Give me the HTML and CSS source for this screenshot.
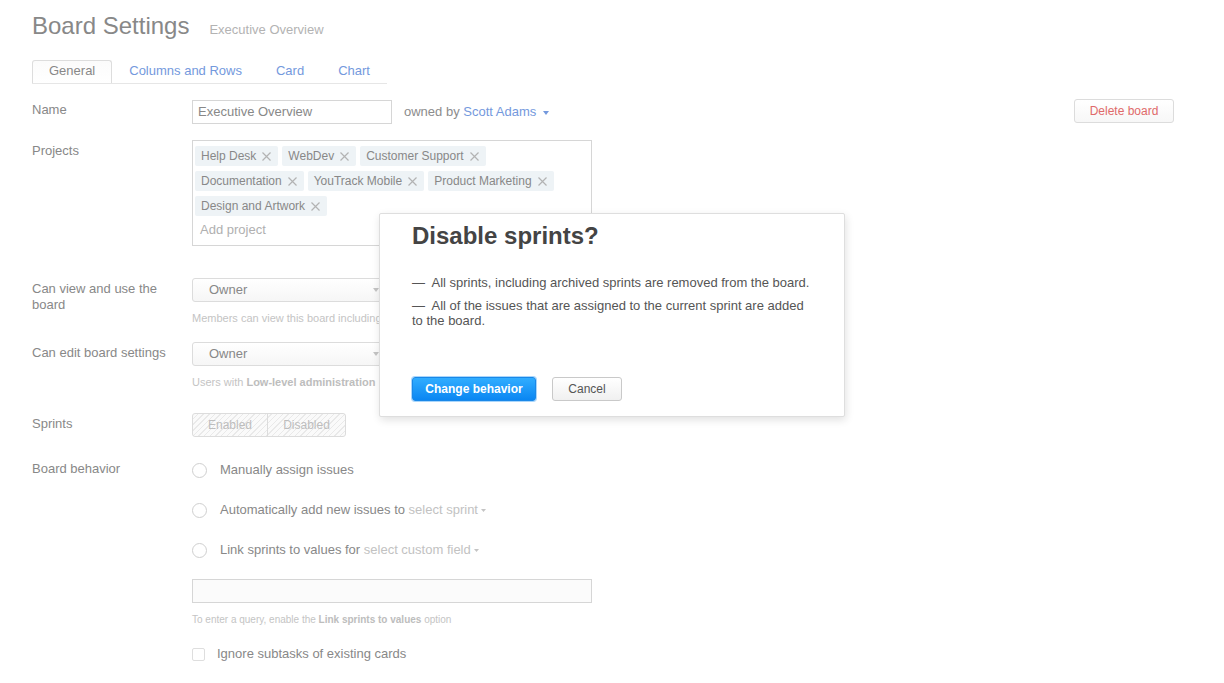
FILE: index.html
```html
<!DOCTYPE html>
<html lang="en">
<head>
<meta charset="utf-8">
<title>Board Settings</title>
<link rel="stylesheet" href="styles.css">
</head>
<body>
<div class="page">
  <div class="header">
    <h1 class="title">Board Settings</h1>
    <span class="subtitle">Executive Overview</span>
  </div>

  <div class="tabs">
    <span class="tab tab-active">General</span>
    <span class="tab">Columns and Rows</span>
    <span class="tab">Card</span>
    <span class="tab">Chart</span>
  </div>

  <div class="row row-name">
    <div class="label label-name">Name</div>
    <div class="control control-inline">
      <div class="text-input">Executive Overview</div>
      <span class="owned">owned by <span class="link">Scott Adams</span>
        <svg class="caret" width="6" height="4" viewBox="0 0 6 4"><path d="M0 0h6L3 4z" fill="#7499dd"/></svg>
      </span>
    </div>
    <button class="btn-delete">Delete board</button>
  </div>

  <div class="row row-projects">
    <div class="label">Projects</div>
    <div class="projects-box">
      <div class="tags">
        <span class="tag">Help Desk<svg class="x" width="9" height="9" viewBox="0 0 9 9"><path d="M0.5 0.5l8 8M8.5 0.5l-8 8" stroke="#b3b3b3" stroke-width="1.2"/></svg></span>
        <span class="tag">WebDev<svg class="x" width="9" height="9" viewBox="0 0 9 9"><path d="M0.5 0.5l8 8M8.5 0.5l-8 8" stroke="#b3b3b3" stroke-width="1.2"/></svg></span>
        <span class="tag">Customer Support<svg class="x" width="9" height="9" viewBox="0 0 9 9"><path d="M0.5 0.5l8 8M8.5 0.5l-8 8" stroke="#b3b3b3" stroke-width="1.2"/></svg></span>
        <span class="tag">Documentation<svg class="x" width="9" height="9" viewBox="0 0 9 9"><path d="M0.5 0.5l8 8M8.5 0.5l-8 8" stroke="#b3b3b3" stroke-width="1.2"/></svg></span>
        <span class="tag">YouTrack Mobile<svg class="x" width="9" height="9" viewBox="0 0 9 9"><path d="M0.5 0.5l8 8M8.5 0.5l-8 8" stroke="#b3b3b3" stroke-width="1.2"/></svg></span>
        <span class="tag">Product Marketing<svg class="x" width="9" height="9" viewBox="0 0 9 9"><path d="M0.5 0.5l8 8M8.5 0.5l-8 8" stroke="#b3b3b3" stroke-width="1.2"/></svg></span>
        <span class="tag">Design and Artwork<svg class="x" width="9" height="9" viewBox="0 0 9 9"><path d="M0.5 0.5l8 8M8.5 0.5l-8 8" stroke="#b3b3b3" stroke-width="1.2"/></svg></span>
      </div>
      <div class="add-project">Add project</div>
    </div>
  </div>

  <div class="row row-view">
    <div class="label">Can view and use the board</div>
    <div class="control">
      <div class="select"><span>Owner</span><svg class="sel-caret" width="6" height="4" viewBox="0 0 6 4"><path d="M0 0h6L3 4z" fill="#c4c4c4"/></svg></div>
      <div class="hint">Members can view this board including</div>
    </div>
  </div>

  <div class="row row-edit">
    <div class="label">Can edit board settings</div>
    <div class="control">
      <div class="select"><span>Owner</span><svg class="sel-caret" width="6" height="4" viewBox="0 0 6 4"><path d="M0 0h6L3 4z" fill="#c4c4c4"/></svg></div>
      <div class="hint">Users with <b>Low-level administration</b></div>
    </div>
  </div>

  <div class="row row-sprints">
    <div class="label">Sprints</div>
    <div class="segmented">
      <span class="seg seg-first">Enabled</span>
      <span class="seg">Disabled</span>
    </div>
  </div>

  <div class="row row-behavior">
    <div class="label">Board behavior</div>
    <div class="control">
      <div class="radio-line"><span class="radio"></span>Manually assign issues</div>
      <div class="radio-line"><span class="radio"></span>Automatically add new issues to&nbsp;<span class="muted">select sprint</span><svg class="m-caret" width="5" height="3" viewBox="0 0 5 3"><path d="M0 0h5L2.5 3z" fill="#c4c4c4"/></svg></div>
      <div class="radio-line"><span class="radio"></span>Link sprints to values for&nbsp;<span class="muted">select custom field</span><svg class="m-caret" width="5" height="3" viewBox="0 0 5 3"><path d="M0 0h5L2.5 3z" fill="#c4c4c4"/></svg></div>
      <div class="query-input"></div>
      <div class="hint hint-small">To enter a query, enable the <b>Link sprints to values</b> option</div>
      <div class="check-line"><span class="checkbox"></span>Ignore subtasks of existing cards</div>
    </div>
  </div>
</div>

<div class="modal">
  <h2 class="modal-title">Disable sprints?</h2>
  <p class="modal-text">—&nbsp; All sprints, including archived sprints are removed from the board.</p>
  <p class="modal-text">—&nbsp; All of the issues that are assigned to the current sprint are added to the board.</p>
  <div class="modal-buttons">
    <button class="btn-primary">Change behavior</button>
    <button class="btn-cancel">Cancel</button>
  </div>
</div>
</body>
</html>
```

FILE: styles.css
```css
* { box-sizing: border-box; }

html, body {
  margin: 0;
  padding: 0;
  background: #ffffff;
}

body {
  font-family: "Liberation Sans", Arial, sans-serif;
  font-size: 13px;
  color: #888888;
}

.page {
  padding: 0 50px 0 32px;
}

.header {
  display: flex;
  align-items: baseline;
  gap: 20px;
  padding-top: 12px;
  height: 40px;
}

.title {
  margin: 0;
  font-size: 24px;
  line-height: 28px;
  font-weight: normal;
  color: #888888;
}

.subtitle {
  font-size: 13px;
  color: #b3b3b3;
}

.tabs {
  display: inline-flex;
  margin-top: 20px;
  border-bottom: 1px solid #e6e6e6;
}

.tab {
  padding: 2px 16px 4px;
  line-height: 16px;
  border: 1px solid transparent;
  border-bottom: none;
  color: #7499dd;
}

.tab-active {
  border-color: #dddddd;
  border-radius: 3px 3px 0 0;
  color: #888888;
  background: linear-gradient(#fbfbfb, #ffffff);
}

.row {
  display: flex;
  align-items: flex-start;
}

.label {
  width: 160px;
  flex: none;
  padding-top: 3px;
  padding-right: 20px;
  line-height: 16px;
}

.label-name {
  padding-top: 2px;
}

.control {
  display: flex;
  flex-direction: column;
  align-items: flex-start;
}

.control-inline {
  flex-direction: row;
  align-items: center;
  gap: 12px;
}

.row-name {
  margin-top: 16px;
}

.text-input {
  width: 200px;
  height: 24px;
  border: 1px solid #d6d6d6;
  padding: 0 5px;
  line-height: 21px;
  color: #888888;
}

.owned {
  color: #8c8c8c;
  line-height: 20px;
}

.link {
  color: #7499dd;
}

.caret {
  margin-left: 3px;
  vertical-align: middle;
}

.btn-delete {
  margin-left: auto;
  margin-top: -1px;
  width: 100px;
  height: 24px;
  border: 1px solid #dcdcdc;
  border-radius: 3px;
  background: linear-gradient(#ffffff, #f7f7f7);
  color: #e06a6a;
  font-family: "Liberation Sans", Arial, sans-serif;
  font-size: 12px;
  padding: 0;
}

.row-projects {
  margin-top: 16px;
}

.projects-box {
  width: 400px;
  border: 1px solid #d6d6d6;
  padding: 5px 2px 6px;
}

.tags {
  display: flex;
  flex-wrap: wrap;
  gap: 5px 4px;
}

.tag {
  display: inline-flex;
  align-items: center;
  height: 20px;
  padding: 0 7px 0 6px;
  background: #eef3f6;
  border-radius: 2px;
  font-size: 12px;
  color: #888888;
}

.tag .x {
  margin-left: 6px;
}

.add-project {
  margin-top: 5px;
  padding: 0 5px;
  line-height: 18px;
  color: #b0b0b0;
}

.row-view {
  margin-top: 32px;
}

.select {
  position: relative;
  width: 200px;
  height: 24px;
  border: 1px solid #dcdcdc;
  border-radius: 3px;
  background: linear-gradient(#ffffff, #f6f6f6);
  padding-left: 16px;
  line-height: 21px;
  color: #888888;
}

.sel-caret {
  position: absolute;
  right: 12px;
  top: 9px;
}

.hint {
  margin-top: 9px;
  font-size: 11px;
  line-height: 14px;
  color: #c4c4c4;
  white-space: nowrap;
}

.hint b {
  color: #bdbdbd;
}

.row-edit {
  margin-top: 17px;
}

.row-sprints {
  margin-top: 24px;
}

.segmented {
  display: flex;
  height: 24px;
  border: 1px solid #dcdcdc;
  border-radius: 3px;
  background: repeating-linear-gradient(-45deg, #fafafa 0 3px, #e9e9e9 3px 4px);
  font-size: 12px;
  color: #bdbdbd;
}

.seg {
  line-height: 22px;
  text-align: center;
  width: 77px;
}

.seg-first {
  width: 75px;
  border-right: 1px solid #dcdcdc;
}

.row-behavior {
  margin-top: 23px;
}

.row-behavior .label {
  padding-top: 1px;
}

.radio-line {
  display: flex;
  align-items: center;
  height: 20px;
  margin-bottom: 20px;
  line-height: 20px;
}

.radio-line:nth-child(3) {
  margin-bottom: 19px;
}

.radio {
  width: 15px;
  height: 15px;
  border: 1px solid #cfcfcf;
  border-radius: 50%;
  background: #ffffff;
  margin-right: 13px;
  flex: none;
}

.muted {
  color: #c2c2c2;
}

.m-caret {
  margin-left: 3px;
}

.query-input {
  width: 400px;
  height: 24px;
  border: 1px solid #d6d6d6;
  background: #fbfbfb;
}

.hint-small {
  font-size: 10px;
  margin-top: 10px;
}

.check-line {
  display: flex;
  align-items: center;
  height: 20px;
  margin-top: 17px;
  line-height: 20px;
}

.checkbox {
  width: 13px;
  height: 13px;
  border: 1px solid #dedede;
  border-radius: 2px;
  margin-right: 12px;
  flex: none;
}

/* modal overlay */
.modal {
  position: absolute;
  left: 379px;
  top: 213px;
  width: 466px;
  background: #ffffff;
  border: 1px solid #dedede;
  border-radius: 2px;
  box-shadow: 1px 3px 8px rgba(0, 0, 0, 0.12);
  padding: 8px 32px 15px 32px;
  color: #555555;
}

.modal-title {
  margin: 0;
  font-size: 24px;
  line-height: 28px;
  font-weight: bold;
  color: #444444;
}

.modal-text {
  margin: 8px 0 0;
  font-size: 13px;
  line-height: 15px;
  color: #555555;
}

.modal-title + .modal-text {
  margin-top: 25px;
}

.modal-buttons {
  display: flex;
  align-items: center;
  gap: 16px;
  margin-top: 49px;
}

.btn-primary {
  height: 24px;
  width: 124px;
  padding: 0;
  border: 1px solid #1a88e8;
  border-radius: 3px;
  background: linear-gradient(#31adff, #0a86f2);
  box-shadow: 0 0 0 1px #a9d6fb;
  color: #ffffff;
  font-family: "Liberation Sans", Arial, sans-serif;
  font-size: 12px;
  font-weight: bold;
}

.btn-cancel {
  height: 24px;
  width: 70px;
  padding: 0;
  border: 1px solid #c9c9c9;
  border-radius: 3px;
  background: linear-gradient(#ffffff, #f0f0f0);
  color: #555555;
  font-family: "Liberation Sans", Arial, sans-serif;
  font-size: 12px;
}
```
